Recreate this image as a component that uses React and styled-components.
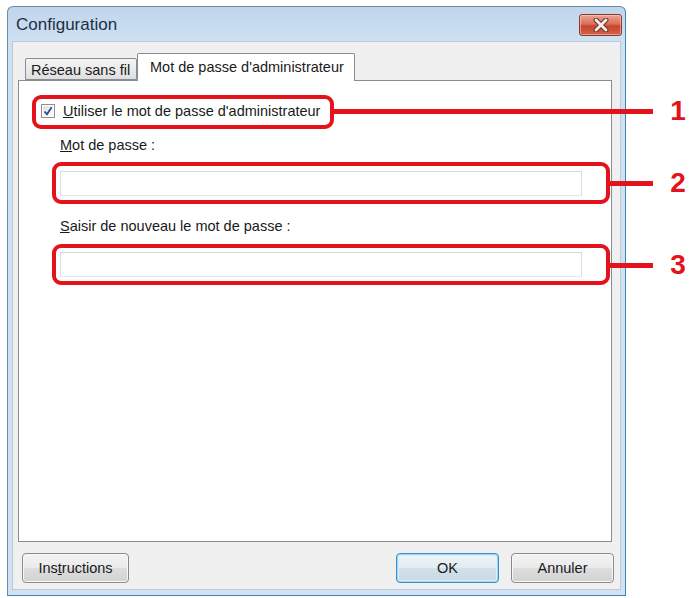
import React from "react";
import styled, { createGlobalStyle } from "styled-components";

const GlobalStyle = createGlobalStyle`
  html, body { margin: 0; padding: 0; background: #ffffff; }
  body { font-family: "Liberation Sans", Arial, sans-serif; }
  * { box-sizing: border-box; }
`;

const Page = styled.div`
  position: relative;
  width: 690px;
  height: 598px;
  padding: 6px 0 0 7px;
  overflow: hidden;
`;

const Window = styled.div`
  width: 619px;
  height: 590px;
  border: 1px solid;
  border-color: #6d8aa6 #3f86ae #3f86ae #6d8aa6;
  border-radius: 6px 6px 0 0;
  background: linear-gradient(#bfd5ec 0px, #cfe0f2 34px, #d2e2f2 100%);
  display: flex;
  flex-direction: column;
`;

const TitleBar = styled.div`
  height: 34px;
  display: flex;
  align-items: flex-start;
  justify-content: space-between;
  padding: 0 3px 0 8px;
`;

const Title = styled.span`
  font-size: 17px;
  line-height: 18px;
  margin-top: 9px;
  color: #1e2f45;
`;

const CloseButton = styled.div`
  width: 43px;
  height: 22px;
  margin-top: 7px;
  border: 1px solid #8a3a2c;
  border-radius: 3px;
  background: linear-gradient(#e9a595 0%, #db6f58 45%, #c8452e 55%, #d0624a 100%);
  display: flex;
  align-items: center;
  justify-content: center;
  box-shadow: inset 0 0 0 1px rgba(255, 220, 210, 0.5);
`;

const FrameBody = styled.div`
  flex: 1;
  display: flex;
  padding: 0 4px 5px 4px;
`;

const Client = styled.div`
  flex: 1;
  background: #f0f0f0;
  border: 1px solid #b8cadc;
  display: flex;
  flex-direction: column;
  padding: 11px 0 6px 0;
`;

const TabArea = styled.div`
  flex: 1;
  display: flex;
  flex-direction: column;
  margin: 0 8px 0 5px;
`;

const TabStrip = styled.div`
  height: 27px;
  display: flex;
  align-items: flex-end;
  padding-left: 7px;
`;

const Tab = styled.div`
  position: relative;
  width: ${(p) => (p.$active ? "218px" : "112px")};
  height: ${(p) => (p.$active ? "28px" : "22px")};
  margin-bottom: ${(p) => (p.$active ? "-1px" : "0")};
  padding-left: ${(p) => (p.$active ? "12px" : "5px")};
  padding-top: ${(p) => (p.$active ? "5px" : "3px")};
  border: 1px solid #898c95;
  border-bottom: ${(p) => (p.$active ? "none" : "1px solid #898c95")};
  border-radius: 2px 2px 0 0;
  background: ${(p) =>
    p.$active ? "#ffffff" : "linear-gradient(#f4f4f4 0%, #ebebeb 50%, #dedede 100%)"};
  font-size: 14.5px;
  line-height: 16px;
  color: #1a1a1a;
  white-space: nowrap;
  z-index: ${(p) => (p.$active ? 1 : 0)};
`;

const TabPanel = styled.div`
  flex: 1;
  background: #ffffff;
  border: 1px solid #898c95;
  padding: 21px 0 0 22px;
  display: flex;
  flex-direction: column;
`;

const CheckRow = styled.label`
  display: flex;
  align-items: center;
  gap: 8px;
  height: 18px;
  font-size: 14.5px;
  color: #1a1a1a;
`;

const CheckBox = styled.span`
  width: 14px;
  height: 14px;
  border: 1px solid #8e8f8f;
  background: linear-gradient(135deg, #dcdcdc 0%, #f4f4f4 60%, #ffffff 100%);
  box-shadow: inset 0 0 0 1px #ffffff;
  display: flex;
  align-items: center;
  justify-content: center;
`;

const FieldGroup = styled.div`
  margin-left: 19px;
  display: flex;
  flex-direction: column;
`;

const FieldLabel = styled.div`
  font-size: 14.5px;
  line-height: 18px;
  color: #1a1a1a;
  margin-top: ${(p) => p.$gap}px;
`;

const TextInput = styled.div`
  width: 522px;
  height: 25px;
  margin-top: 17px;
  background: #ffffff;
  border: 1px solid;
  border-color: #d4d6da #dadde2 #e4e8ec #dadde2;
`;

const ButtonRow = styled.div`
  display: flex;
  align-items: center;
  margin-top: 11px;
  padding: 0 6px 0 9px;
`;

const Spacer = styled.div`
  flex: 1;
`;

const Button = styled.div`
  width: ${(p) => p.$w}px;
  height: 30px;
  margin-left: ${(p) => p.$ml || 0}px;
  border: 1px solid ${(p) => (p.$default ? "#3c8ec4" : "#8a8a8a")};
  border-radius: 4px;
  background: ${(p) =>
    p.$default
      ? "linear-gradient(#eef5f9 0%, #e2ecf2 48%, #d3e0e8 52%, #c9d8e2 100%)"
      : "linear-gradient(#f3f3f3 0%, #ebebeb 48%, #dddddd 52%, #d2d2d2 100%)"};
  box-shadow: ${(p) =>
    p.$default ? "inset 0 0 0 1px #9fd6f2, inset 0 0 0 2px #d8eef9" : "inset 0 0 0 1px #f8f8f8"};
  display: flex;
  align-items: center;
  justify-content: center;
  font-size: 14.5px;
  color: #1a1a1a;
`;

const CalloutBox = styled.div`
  position: absolute;
  left: ${(p) => p.$x}px;
  top: ${(p) => p.$y}px;
  width: ${(p) => p.$w}px;
  height: ${(p) => p.$h}px;
  border: 4px solid #e4131b;
  border-radius: 9px;
  z-index: 5;
`;

const CalloutLine = styled.div`
  position: absolute;
  left: ${(p) => p.$x}px;
  top: ${(p) => p.$y}px;
  width: ${(p) => p.$w}px;
  height: 5px;
  background: #e4131b;
  z-index: 5;
`;

const CalloutNumber = styled.div`
  position: absolute;
  left: 664px;
  top: ${(p) => p.$y}px;
  width: 28px;
  height: 30px;
  font-family: "Liberation Sans", Arial, sans-serif;
  font-weight: bold;
  font-size: 28px;
  line-height: 30px;
  color: #e4131b;
  text-align: center;
  z-index: 5;
`;

const callouts = [
  { n: "1", box: { x: 32, y: 95, w: 302, h: 34 }, lineY: 109, lineX: 333 },
  { n: "2", box: { x: 52, y: 162, w: 558, h: 42 }, lineY: 181, lineX: 608 },
  { n: "3", box: { x: 52, y: 244, w: 558, h: 41 }, lineY: 263, lineX: 608 },
];

export default function App() {
  return (
    <>
      <GlobalStyle />
      <Page>
        <Window>
          <TitleBar>
            <Title>Configuration</Title>
            <CloseButton>
              <svg width="18" height="14" viewBox="0 0 18 14">
                <path d="M4 2 L14 12 M14 2 L4 12" stroke="#7a3326" strokeWidth="5" strokeLinecap="round" />
                <path d="M4 2 L14 12 M14 2 L4 12" stroke="#f4f0ee" strokeWidth="2.8" strokeLinecap="round" />
              </svg>
            </CloseButton>
          </TitleBar>
          <FrameBody>
            <Client>
              <TabArea>
                <TabStrip>
                  <Tab>Réseau sans fil</Tab>
                  <Tab $active>Mot de passe d'administrateur</Tab>
                </TabStrip>
                <TabPanel>
                  <CheckRow>
                    <CheckBox>
                      <svg width="10" height="10" viewBox="0 0 10 10">
                        <path d="M1.5 5.5 L4 8.2 L8.6 1.2" fill="none" stroke="#2c4f86" strokeWidth="1.8" />
                      </svg>
                    </CheckBox>
                    <span>
                      <u>U</u>tiliser le mot de passe d'administrateur
                    </span>
                  </CheckRow>
                  <FieldGroup>
                    <FieldLabel $gap={16}>
                      <u>M</u>ot de passe :
                    </FieldLabel>
                    <TextInput />
                    <FieldLabel $gap={21}>
                      <u>S</u>aisir de nouveau le mot de passe :
                    </FieldLabel>
                    <TextInput />
                  </FieldGroup>
                </TabPanel>
              </TabArea>
              <ButtonRow>
                <Button $w={107}>
                  <span>
                    Ins<u>t</u>ructions
                  </span>
                </Button>
                <Spacer />
                <Button $w={103} $default>
                  OK
                </Button>
                <Button $w={103} $ml={12}>
                  Annuler
                </Button>
              </ButtonRow>
            </Client>
          </FrameBody>
        </Window>
        {callouts.map((c) => (
          <React.Fragment key={c.n}>
            <CalloutBox $x={c.box.x} $y={c.box.y} $w={c.box.w} $h={c.box.h} />
            <CalloutLine $x={c.lineX} $y={c.lineY} $w={653 - c.lineX} />
            <CalloutNumber $y={c.lineY + 2 - 15}>{c.n}</CalloutNumber>
          </React.Fragment>
        ))}
      </Page>
    </>
  );
}
